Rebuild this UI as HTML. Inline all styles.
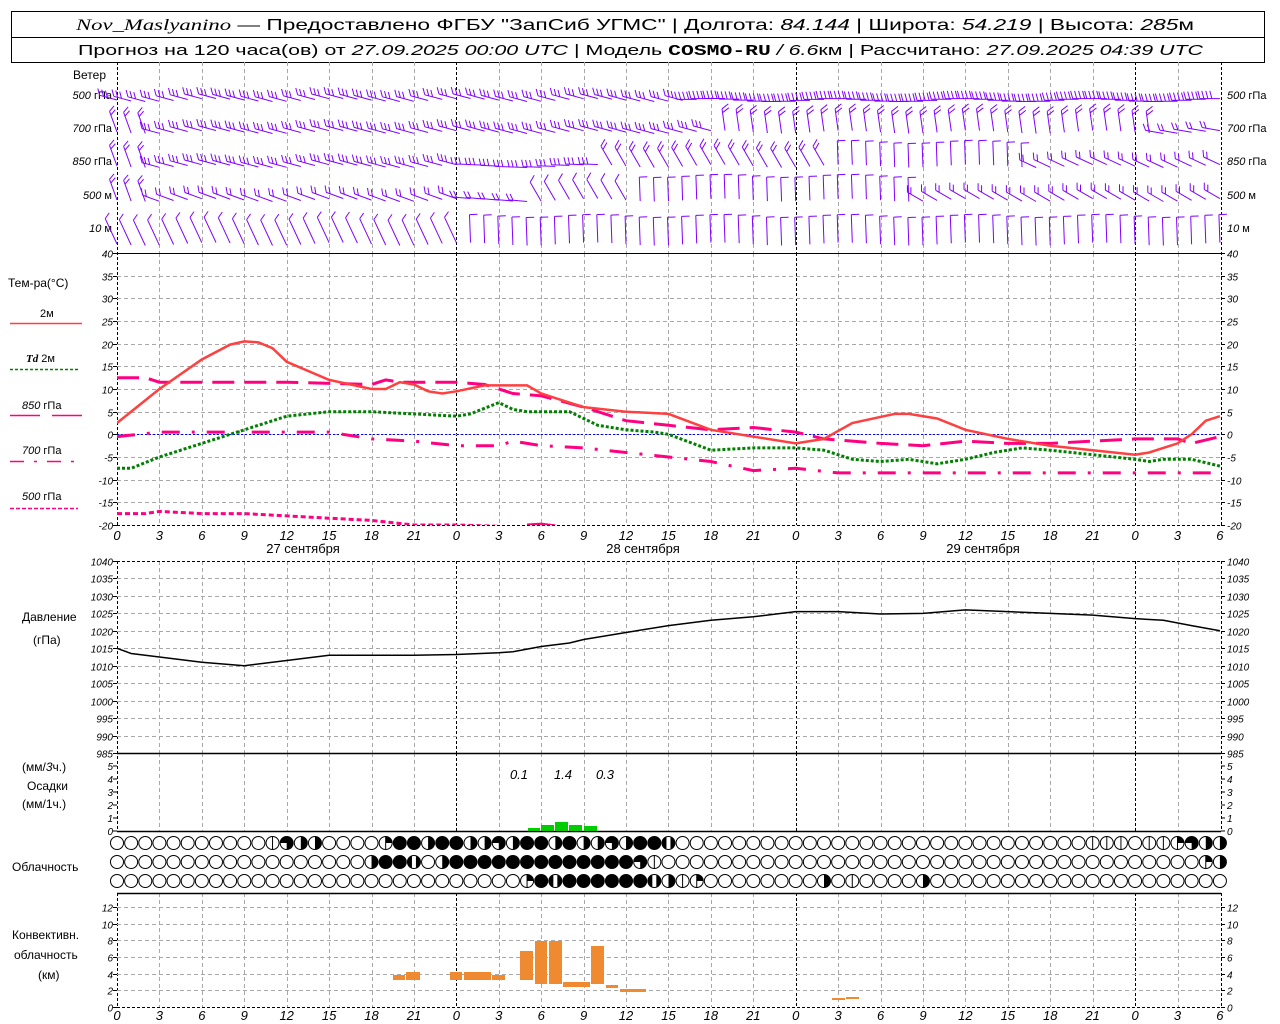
<!DOCTYPE html>
<html><head><meta charset="utf-8"><style>
html,body{margin:0;padding:0;background:#fff;width:1280px;height:1024px;overflow:hidden}
svg{display:block}
text{font-family:"Liberation Sans","DejaVu Sans",sans-serif;fill:#000}
.it{font-style:italic}
</style></head><body>
<svg id="s" width="1280" height="1024" xmlns="http://www.w3.org/2000/svg">
<rect x="11.5" y="11.5" width="1253" height="51" fill="#fff" stroke="#000"/>
<line x1="11" y1="37.5" x2="1265" y2="37.5" stroke="#000"/>
<text x="76" y="30" font-size="16" textLength="1118" lengthAdjust="spacingAndGlyphs"><tspan class="it" font-family="Liberation Serif">Nov_Maslyanino</tspan> — Предоставлено ФГБУ "ЗапСиб УГМС" | Долгота: <tspan class="it">84.144</tspan> | Широта: <tspan class="it">54.219</tspan> | Высота: <tspan class="it">285</tspan>м</text>
<text x="78" y="55" font-size="15" textLength="1125" lengthAdjust="spacingAndGlyphs">Прогноз на 120 часа(ов) от <tspan class="it">27.09.2025 00:00 UTC</tspan>  | Модель <tspan font-family="Liberation Mono" font-weight="bold">COSMO-RU</tspan> <tspan class="it">/ 6.6</tspan>км | Рассчитано: <tspan class="it">27.09.2025 04:39 UTC</tspan></text>
<g id="g"></g>
</svg>
<script>
(function(){
var G=document.getElementById('g'),out=[];
function X(h){return 117+h*14.14;}
function ln(x1,y1,x2,y2,st){out.push('<line x1="'+x1+'" y1="'+y1+'" x2="'+x2+'" y2="'+y2+'" '+st+'/>');}
function tx(x,y,s,t,extra){out.push('<text x="'+x+'" y="'+y+'" font-size="'+s+'" '+(extra||'')+'>'+t+'</text>');}
var GR='stroke="#a8a8a8" stroke-width="1" stroke-dasharray="4,3"';
var BK='stroke="#000" stroke-width="1" stroke-dasharray="3,2"';
var spans=[[62,253],[253,525],[561,753],[753,831],[893,1007]];
for(var h=3;h<78;h+=3){var x=Math.round(X(h))+.5;var st=(h%24==0)?BK:GR;spans.forEach(function(s){ln(x,s[0],x,s[1],st);});}
[[62,525],[561,831],[893,1007]].forEach(function(s){ln(117.5,s[0],117.5,s[1],BK);ln(1221.5,s[0],1221.5,s[1],BK);});
function TY(t){return 253+(40-t)*4.533;}
for(var t=-20;t<=40;t+=5){var y=Math.round(TY(t))+.5;if(t>-20&&t<40)ln(117,y,1221,y,GR);ln(113,y,117,y,'stroke="#000"');ln(1221,y,1225,y,'stroke="#000"');
tx(113,y+4,10,t,'class="it" text-anchor="end"');tx(1227,y+4,10,t,'class="it"');}
ln(117,253.5,1221,253.5,'stroke="#000"');ln(117,525.5,1221,525.5,BK);
for(var h=0;h<=78;h+=3){tx(X(h),540,13,h%24,'class="it" text-anchor="middle"');tx(X(h),1020,13,h%24,'class="it" text-anchor="middle"');}
tx(303,553,13,'27 сентября','text-anchor="middle"');tx(643,553,13,'28 сентября','text-anchor="middle"');tx(983,553,13,'29 сентября','text-anchor="middle"');
function PY(p){return 561+(1040-p)*3.49;}
for(var p=985;p<=1040;p+=5){var y=Math.round(PY(p))+.5;if(p>985)ln(117,y,1221,y,p==1040?BK:GR);ln(113,y,117,y,'stroke="#000"');ln(1221,y,1225,y,'stroke="#000"');
tx(113,y+4,10,p,'class="it" text-anchor="end"');tx(1227,y+4,10,p,'class="it"');}
ln(117,753.5,1221,753.5,'stroke="#000" stroke-width="1.5"');
for(var v=0;v<=5;v++){var y=831-v*13;ln(113,y,117,y,'stroke="#000"');ln(1221,y,1225,y,'stroke="#000"');tx(113,y+4,10,v,'class="it" text-anchor="end"');tx(1227,y+4,10,v,'class="it"');}
ln(117,831.5,1221,831.5,'stroke="#000" stroke-width="1.5"');
function CY(k){return 1007-k*8.33;}
for(var k=0;k<=12;k+=2){var y=Math.round(CY(k))+.5;if(k>0)ln(117,y,1221,y,GR);ln(113,y,117,y,'stroke="#000"');ln(1221,y,1225,y,'stroke="#000"');tx(113,y+4,10,k,'class="it" text-anchor="end"');tx(1227,y+4,10,k,'class="it"');}
ln(117,893.5,1221,893.5,'stroke="#000" stroke-width="1.5"');ln(117,1007.5,1221,1007.5,BK);
tx(73,79,12,'Ветер');
var wl=[[95,'500 гПа'],[128,'700 гПа'],[161,'850 гПа'],[195,'500 м'],[228,'10  м']];
wl.forEach(function(w){var a=w[1].split(' ');tx(112,w[0]+4,11,'<tspan class="it">'+a[0]+'</tspan> '+a.slice(1).join(' '),'text-anchor="end"');tx(1227,w[0]+4,11,'<tspan class="it">'+a[0]+'</tspan> '+a.slice(1).join(' '));});
tx(8,287,12,'Тем-ра(°С)');
tx(40,317,11,'2м');ln(10,323.5,82,323.5,'stroke="#ff4040" stroke-width="1.5"');
tx(26,362,11,'<tspan class="it" font-weight="bold" font-family="Liberation Serif">Td</tspan>  2м');ln(10,369.5,78,369.5,'stroke="#008000" stroke-width="1.5" stroke-dasharray="3,2"');
tx(22,409,11,'<tspan class="it">850</tspan> гПа');ln(10,415.5,40,415.5,'stroke="#ff0080" stroke-width="1.5"');ln(52,415.5,82,415.5,'stroke="#ff0080" stroke-width="1.5"');
tx(22,454,11,'<tspan class="it">700</tspan> гПа');ln(10,461.5,78,461.5,'stroke="#ff0080" stroke-width="1.5" stroke-dasharray="14,10,3,10"');
tx(22,500,11,'<tspan class="it">500</tspan> гПа');ln(10,508.5,78,508.5,'stroke="#ff0080" stroke-width="1.5" stroke-dasharray="4,2"');
tx(22,621,12,'Давление');tx(33,644,12,'(гПа)');
tx(22,771,12,'(мм/<tspan class="it">3</tspan>ч.)');tx(27,790,12,'Осадки');tx(22,808,12,'(мм/1ч.)');
tx(12,871,12,'Облачность');
tx(12,939,12,'Конвективн.');tx(14,959,12,'облачность');tx(38,979,12,'(км)');
function poly(pts,f,st){var d=pts.map(function(p){return X(p[0]).toFixed(1)+','+f(p[1]).toFixed(1);}).join(' ');out.push('<polyline fill="none" points="'+d+'" '+st+'/>');}
ln(117,434.5,1221,434.5,'stroke="#0000ff" stroke-width="1" stroke-dasharray="2,2"');
out.push('<clipPath id="tc"><rect x="117" y="253" width="1104" height="272"/></clipPath><g clip-path="url(#tc)">');
poly([[0,-17.5],[2,-17.5],[3,-17],[6,-17.5],[9,-17.5],[12,-18],[15,-18.5],[18,-19],[21,-20],[24,-20],[27,-20.3],[28,-20.5]],TY,'stroke="#ff0080" stroke-width="3" stroke-dasharray="5,3"');
poly([[29,-20],[30,-19.8],[31,-20.2]],TY,'stroke="#ff0080" stroke-width="3"');
poly([[0,-0.5],[3,0.5],[9,0.5],[15,0.5],[18,-1],[21,-1.5],[24,-2.5],[27,-2.5],[28,-1.5],[30,-2.5],[33,-3],[36,-4],[39,-5],[42,-6],[45,-8],[48,-7.5],[51,-8.5],[54,-8.5],[60,-8.5],[66,-8.5],[72,-8.5],[78,-8.5]],TY,'stroke="#ff0080" stroke-width="3" stroke-dasharray="18,12,3,12"');
poly([[0,12.5],[2,12.5],[3,11.5],[12,11.5],[18,11],[19,12],[20,11.5],[24,11.5],[26,11],[28,9],[30,8.5],[33,6],[36,3],[39,2],[42,1],[45,1.5],[48,0.5],[50,-1],[54,-2],[57,-2.5],[60,-1.5],[63,-2],[66,-2],[69,-1.5],[72,-1],[75,-1],[76,-2],[78,-0.5]],TY,'stroke="#ff0080" stroke-width="3" stroke-dasharray="22,10"');
poly([[0,-7.5],[1,-7.5],[3,-5],[6,-2],[9,1],[12,4],[15,5],[18,5],[21,4.5],[24,4],[25,4.5],[27,7],[28,5.5],[29,5],[30,5],[32,5],[34,2],[36,1],[38,0.5],[39,0],[42,-3.5],[45,-3],[48,-3],[50,-3.5],[52,-5.5],[54,-6],[56,-5.5],[58,-6.5],[60,-5.5],[62,-4],[64,-3],[66,-3.5],[69,-4.5],[72,-5.5],[73,-6],[74,-5.5],[76,-5.5],[78,-7]],TY,'stroke="#008000" stroke-width="3" stroke-dasharray="3,2"');
poly([[0,2.5],[3,10],[6,16.5],[8,19.8],[9,20.5],[10,20.3],[11,19],[12,16],[15,12],[18,10],[19,10],[20,11.5],[21,11],[22,9.5],[23,9],[24,9.5],[26,10.8],[29,10.8],[30,9],[31,8],[33,6],[36,5],[39,4.5],[42,1],[45,-0.5],[48,-2],[50,-1],[52,2.5],[55,4.5],[56,4.5],[58,3.5],[60,1],[63,-1],[66,-2.5],[69,-3.5],[72,-4.5],[73,-4],[75,-2],[76,0],[77,3],[78,4]],TY,'stroke="#ff4040" stroke-width="2.5"');
out.push('</g>');
poly([[0,1015],[1,1013.5],[3,1012.5],[6,1011],[9,1010],[12,1011.5],[15,1013],[18,1013],[21,1013],[24,1013.2],[27,1013.7],[28,1014],[30,1015.5],[32,1016.5],[33,1017.5],[36,1019.5],[39,1021.5],[42,1023],[45,1024],[48,1025.5],[51,1025.5],[54,1024.8],[57,1025],[60,1026],[63,1025.5],[66,1025],[69,1024.5],[72,1023.5],[74,1023],[76,1021.5],[78,1020]],PY,'stroke="#000" stroke-width="1.5"');
[[528,541,3],[541,555,6],[555,569,9],[569,583,6],[584,598,5]].forEach(function(b){out.push('<rect x="'+b[0]+'" y="'+(831-b[2])+'" width="'+(b[1]-b[0]-1)+'" height="'+b[2]+'" fill="#00cc00"/>');});
tx(519,779,13,'0.1','class="it" text-anchor="middle"');tx(563,779,13,'1.4','class="it" text-anchor="middle"');tx(605,779,13,'0.3','class="it" text-anchor="middle"');
[[393,406,975,980],[406,421,972,980],[450,463,972,980],[464,492,972,980],[492,506,975,980],[520,534,951,980],[535,548,941,984],[549,563,941,984],[563,591,982,987],[591,605,946,984],[606,619,985,988],[620,647,989,992],[832,846,998,1000],[846,860,997,999]].forEach(function(b){out.push('<rect x="'+b[0]+'" y="'+b[2]+'" width="'+(b[1]-b[0]-1)+'" height="'+(b[3]-b[2])+'" fill="#f08a30"/>');});
var rows=[
'ooooooooooovthhooooqffhffhhthffhfhhthffbbfhhoooooooooooooooooooooooooooooooovvvovvqthh',
'oooooooooooooooooohffbohffffffffffffftvoooooooooooooooooooooooooooooooooooohh',
'oooooooooooooooooooooooooooooqfbffffffbhvqoooooooohovoooohoooooooooooooooooooooo'];
rows.forEach(function(r,ri){var y=[843,862,881][ri];
for(var i=0;i<79;i++){var c=r[i]||'o';
if(ri==0&&i>=40){c='o';var m={69:'v',70:'v',71:'v',73:'v',74:'v',75:'q',76:'t',77:'h',78:'h'};if(m[i])c=m[i];}
if(ri==1&&i>=40){c='o';if(i==77)c='q';if(i==78)c='h';}
var x=X(i),rr=6.5;
out.push('<circle cx="'+x+'" cy="'+y+'" r="'+rr+'" fill="'+(c=='f'?'#000':'#fff')+'" stroke="#000" stroke-width="1"/>');
if(c=='h')out.push('<path d="M'+x+','+(y-rr)+' A'+rr+','+rr+' 0 0 1 '+x+','+(y+rr)+'Z" fill="#000"/>');
if(c=='q')out.push('<path d="M'+x+','+y+' L'+x+','+(y-rr)+' A'+rr+','+rr+' 0 0 1 '+(x+rr)+','+y+'Z" fill="#000"/><line x1="'+x+'" y1="'+(y-rr)+'" x2="'+x+'" y2="'+(y+rr)+'" stroke="#000"/>');
if(c=='t')out.push('<path d="M'+x+','+y+' L'+(x-rr)+','+y+' A'+rr+','+rr+' 0 1 1 '+x+','+(y+rr)+'Z" fill="#000"/>');
if(c=='v')ln(x,y-rr,x,y+rr,'stroke="#000"');
if(c=='b'){out.push('<path d="M'+(x-2)+','+(y-6.2)+' A'+rr+','+rr+' 0 0 0 '+(x-2)+','+(y+6.2)+'Z M'+(x+2)+','+(y-6.2)+' A'+rr+','+rr+' 0 0 1 '+(x+2)+','+(y+6.2)+'Z" fill="#000"/>');}
}});
var wc='#8000ff';
function barb(x,y,a,n,L,fa,fl){var r=a*Math.PI/180,ex=x+L*Math.cos(r),ey=y+L*Math.sin(r);var d='M'+x.toFixed(1)+','+y.toFixed(1)+'L'+ex.toFixed(1)+','+ey.toFixed(1);
var fr=(a+fa)*Math.PI/180;for(var k=0;k<n;k++){var px=ex-k*4*Math.cos(r),py=ey-k*4*Math.sin(r);d+='M'+px.toFixed(1)+','+py.toFixed(1)+'l'+(fl*Math.cos(fr)).toFixed(1)+','+(fl*Math.sin(fr)).toFixed(1);}return d;}
var W=[[100,[[0,40,195,3,18,60,7],[41,78,180,4,20,75,8]]],
[132,[[0,2,250,2,22,60,7],[3,42,195,3,18,60,7],[43,73,262,2,22,60,8],[74,78,190,2,18,60,7]]],
[166,[[0,2,250,2,22,60,7],[3,24,195,3,18,60,7],[25,34,182,3,18,75,7],[35,50,240,2,22,60,8],[51,64,268,1,24,90,8],[65,78,205,2,18,60,7]]],
[200,[[0,2,250,2,22,60,7],[3,24,200,2,18,60,7],[25,29,185,2,18,60,7],[30,36,240,1,22,60,8],[37,56,268,1,24,90,8],[57,78,210,2,18,60,7]]],
[244,[[0,24,245,1,28,60,7],[25,78,268,1,28,90,8]]]];
var d='';W.forEach(function(w){var y=w[0];w[1].forEach(function(s){for(var h=s[0];h<=s[1];h++){d+=barb(X(h),y+Math.sin(h*0.7)*1.5,s[2],s[3],s[4],s[5],s[6]);}});});
out.push('<path d="'+d+'" fill="none" stroke="'+wc+'" stroke-width="1"/>');
G.innerHTML=out.join('');
})();
</script>
</body></html>
